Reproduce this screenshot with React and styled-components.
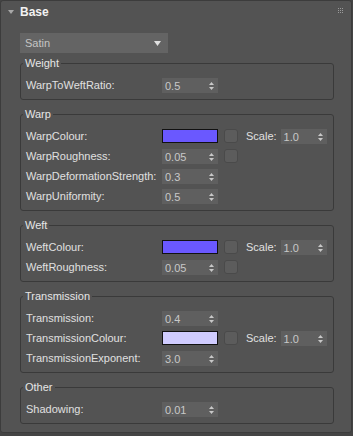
import styled, { createGlobalStyle } from "styled-components";

const GlobalStyle = createGlobalStyle`
  html, body {
    margin: 0;
    padding: 0;
    background: #444444;
  }
  body {
    font-family: "Liberation Sans", Arial, sans-serif;
    font-size: 11px;
    color: #dcdcdc;
  }
`;

const Rollout = styled.div`
  width: 350px;
  height: 431px;
  background: #535353;
  border: 1px solid #3c3c3c;
  border-radius: 3px;
`;

const Header = styled.div`
  height: 22px;
  display: flex;
  align-items: center;
  padding-left: 7px;
  gap: 6px;
  position: relative;
`;

const Title = styled.span`
  font-weight: bold;
  font-size: 12px;
  color: #f2f2f2;
`;

const Grip = styled.svg`
  position: absolute;
  right: 7px;
  top: 7px;
`;

const Body = styled.div`
  padding: 10px 17px 0 19px;
`;

const Dropdown = styled.div`
  width: 148px;
  height: 20px;
  box-sizing: border-box;
  background: #646464;
  display: flex;
  align-items: center;
  justify-content: space-between;
  padding: 0 7px 0 5px;
  color: #c4c4c4;
`;

const Groups = styled.div`
  display: flex;
  flex-direction: column;
  gap: 7px;
  margin-top: 3px;
`;

const Group = styled.fieldset`
  margin: 0;
  padding: 6px 0 6px 5px;
  border: 1px solid #3a3a3a;
  border-radius: 3px;
  min-width: 0;
`;

const Legend = styled.legend`
  padding: 0 2px;
  margin-left: -3px;
  height: 15px;
  line-height: 15px;
  color: #e6e6e6;
`;

const Rows = styled.div`
  display: flex;
  flex-direction: column;
  gap: 4px;
`;

const Row = styled.div`
  display: grid;
  grid-template-columns: 136px auto;
  height: 16px;
  align-items: center;
`;

const Label = styled.span`
  color: #e0e0e0;
  white-space: nowrap;
`;

const Controls = styled.div`
  display: flex;
  align-items: flex-start;
  height: 16px;
  padding-top: 1px;
  box-sizing: border-box;
`;

const Spinner = styled.div`
  width: ${(p) => p.$width || 56}px;
  height: 15px;
  box-sizing: border-box;
  background: #5f5f5f;
  display: flex;
  align-items: center;
  justify-content: space-between;
  padding: 0 4px 0 3px;
  color: #c8c8c8;
  margin-left: ${(p) => p.$gap || 0}px;
`;

const Swatch = styled.div`
  width: 56px;
  height: 14px;
  box-sizing: border-box;
  border: 1px solid #111111;
  background: ${(p) => p.$color};
`;

const Check = styled.div`
  width: 14px;
  height: 14px;
  box-sizing: border-box;
  margin-left: 6px;
  background: #5c5c5c;
  border: 1px solid #4a4a4a;
  border-radius: 3px;
`;

const ScaleLabel = styled.span`
  margin-left: 8px;
  line-height: 14px;
  color: #e0e0e0;
`;

const Arrows = () => (
  <svg width="5" height="8" viewBox="0 0 5 8">
    <path d="M2.5 0 L5 3 L0 3 Z" fill="#c8c8c8" />
    <path d="M0 5 L5 5 L2.5 8 Z" fill="#c8c8c8" />
  </svg>
);

const Num = ({ value, width, gap }) => (
  <Spinner $width={width} $gap={gap}>
    <span>{value}</span>
    <Arrows />
  </Spinner>
);

const ColourRow = ({ label, color }) => (
  <Row>
    <Label>{label}</Label>
    <Controls>
      <Swatch $color={color} />
      <Check />
      <ScaleLabel>Scale:</ScaleLabel>
      <Num value="1.0" width={46} gap={4} />
    </Controls>
  </Row>
);

const NumRow = ({ label, value, check }) => (
  <Row>
    <Label>{label}</Label>
    <Controls>
      <Num value={value} />
      {check && <Check />}
    </Controls>
  </Row>
);

export default function App() {
  return (
    <>
      <GlobalStyle />
      <Rollout>
        <Header>
          <svg width="6" height="4" viewBox="0 0 6 4">
            <path d="M0 0 L6 0 L3 4 Z" fill="#a8a8a8" />
          </svg>
          <Title>Base</Title>
          <Grip width="6" height="6" viewBox="0 0 6 6">
            {[0, 2, 4].map((y) =>
              [0, 2, 4].map((x) => (
                <rect key={`${x}-${y}`} x={x} y={y} width="1" height="1" fill="#9a9a9a" />
              ))
            )}
          </Grip>
        </Header>
        <Body>
          <Dropdown>
            <span>Satin</span>
            <svg width="7" height="5" viewBox="0 0 7 5">
              <path d="M0 0 L7 0 L3.5 5 Z" fill="#e0e0e0" />
            </svg>
          </Dropdown>
          <Groups>
            <Group>
              <Legend>Weight</Legend>
              <Rows>
                <NumRow label="WarpToWeftRatio:" value="0.5" />
              </Rows>
            </Group>
            <Group>
              <Legend>Warp</Legend>
              <Rows>
                <ColourRow label="WarpColour:" color="#6a58ff" />
                <NumRow label="WarpRoughness:" value="0.05" check />
                <NumRow label="WarpDeformationStrength:" value="0.3" />
                <NumRow label="WarpUniformity:" value="0.5" />
              </Rows>
            </Group>
            <Group>
              <Legend>Weft</Legend>
              <Rows>
                <ColourRow label="WeftColour:" color="#6a58ff" />
                <NumRow label="WeftRoughness:" value="0.05" check />
              </Rows>
            </Group>
            <Group>
              <Legend>Transmission</Legend>
              <Rows>
                <NumRow label="Transmission:" value="0.4" />
                <ColourRow label="TransmissionColour:" color="#d0ccff" />
                <NumRow label="TransmissionExponent:" value="3.0" />
              </Rows>
            </Group>
            <Group>
              <Legend>Other</Legend>
              <Rows>
                <NumRow label="Shadowing:" value="0.01" />
              </Rows>
            </Group>
          </Groups>
        </Body>
      </Rollout>
    </>
  );
}
